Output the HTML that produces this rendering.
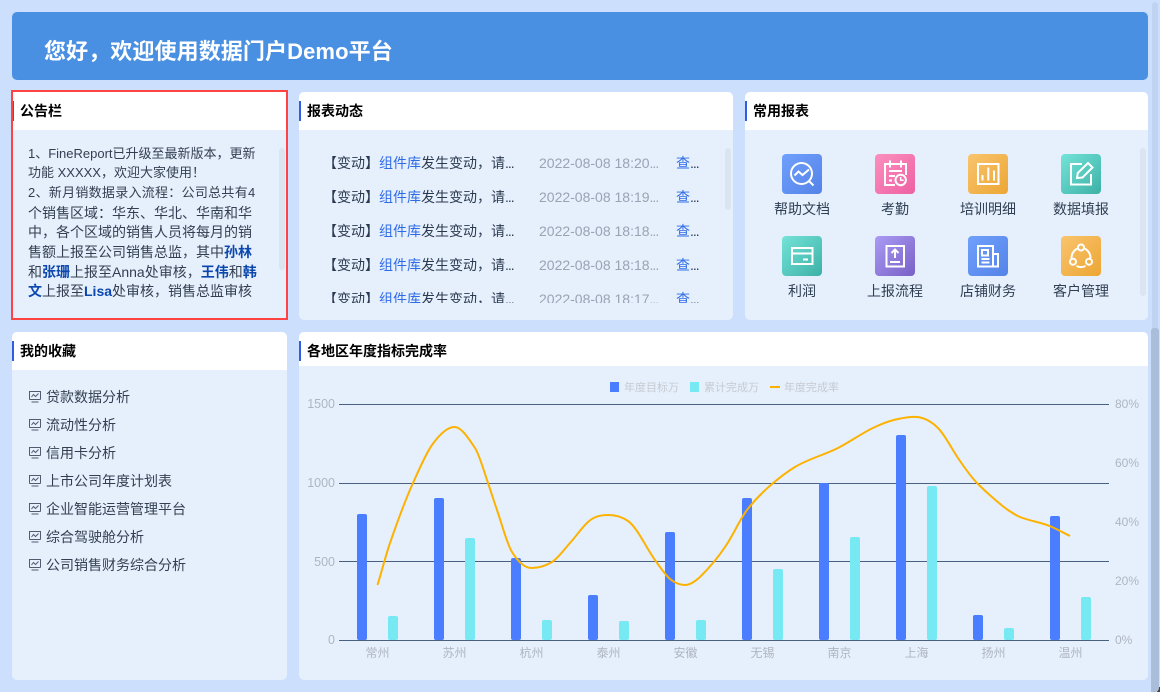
<!DOCTYPE html>
<html lang="zh-CN"><head><meta charset="utf-8"><title>数据门户</title>
<style>
*{box-sizing:border-box}
html,body{margin:0;padding:0;width:1160px;height:692px;overflow:hidden;background:#cce0fe}
body{position:relative;font-family:"Liberation Sans","Noto Sans CJK SC",sans-serif;font-size:14px;color:#333f50}
.abs{position:absolute}
.t{position:absolute;white-space:nowrap;line-height:20px;height:20px}
.n{font-size:13px;color:#333f50}
.banner{position:absolute;left:12px;top:12px;width:1136px;height:68px;background:#4a90e2;border-radius:5px}
.banner div{position:absolute;left:32px;top:24px;font-size:22px;font-weight:bold;color:#fff;line-height:32px;white-space:nowrap;letter-spacing:.1px}
.panel{position:absolute;background:#e6f0fd;border-radius:5px;overflow:hidden}
.head{position:absolute;left:0;top:0;width:100%;height:38px;background:#fff}
.head i{position:absolute;left:0;top:9px;width:2px;height:20px;background:#2f5fe0}
.head b{position:absolute;left:8px;top:9px;line-height:20px;font-size:14px;color:#000;white-space:nowrap}
.sb{position:absolute;width:6px;background:#dbe5f1;border-radius:3px}
.a{color:#0b47ad;font-weight:bold}
.rows{position:absolute;left:299px;top:130px;width:434px;height:173px;overflow:hidden}
.rows .t{color:#2c3a4f}
.rows em{font-style:normal;color:#2f6be6}
.rows .d{color:#98a3b3}
.rows u{text-decoration:none;letter-spacing:-1px;color:#2c3a4f}
.rows .d u{color:#98a3b3}
.lbl{position:absolute;width:90px;text-align:center;line-height:20px;color:#2f3e52;white-space:nowrap}
.ic{position:absolute;width:40px;height:40px;border-radius:4px}
.ic svg{display:block}
.ic svg *{fill:none;stroke:#fff;stroke-width:2}
.b1{background:linear-gradient(135deg,#70a0fc,#5483e8)}
.b2{background:linear-gradient(135deg,#fb90bf,#ee60a2)}
.b3{background:linear-gradient(135deg,#f9c46e,#eca633)}
.b4{background:linear-gradient(135deg,#74e3d8,#3db1a7)}
.b5{background:linear-gradient(135deg,#ab9bf4,#7860c6)}
.fav{position:absolute;left:46px;white-space:nowrap;line-height:20px;color:#333f50}
.fi{position:absolute;left:29px}
</style></head><body>

<div class="banner"><div>您好，欢迎使用数据门户Demo平台</div></div>

<!-- 公告栏 -->
<div class="panel" style="left:12px;top:92px;width:275px;height:228px;border-radius:0">
  <div class="head"><i></i><b>公告栏</b></div>
</div>
<div class="abs" style="left:11px;top:90px;width:277px;height:230px;border:2px solid #ff4343"></div>
<div class="t n" style="left:28px;top:144px">1、FineReport已升级至最新版本，更新</div>
<div class="t n" style="left:28px;top:163px">功能 XXXXX，欢迎大家使用！</div>
<div class="t n" style="left:28px;top:183px;letter-spacing:.28px">2、新月销数据录入流程：公司总共有4</div>
<div class="t" style="left:28px;top:203px">个销售区域：华东、华北、华南和华</div>
<div class="t" style="left:28px;top:222px">中，各个区域的销售人员将每月的销</div>
<div class="t" style="left:28px;top:242px">售额上报至公司销售总监，其中<span class="a">孙林</span></div>
<div class="t" style="left:28px;top:262px">和<span class="a">张珊</span>上报至Anna处审核，<span class="a">王伟</span>和<span class="a">韩</span></div>
<div class="t" style="left:28px;top:281px"><span class="a">文</span>上报至<span class="a">Lisa</span>处审核，销售总监审核</div>
<div class="sb" style="left:279px;top:148px;height:122px"></div>

<!-- 报表动态 -->
<div class="panel" style="left:299px;top:92px;width:434px;height:228px">
  <div class="head"><i></i><b>报表动态</b></div>
</div>
<div class="rows">
  <div class="t" style="left:24px;top:23px">【变动】<em>组件库</em>发生变动，请<u>...</u></div><div class="t d" style="left:240px;top:23px">2022-08-08 18:20<u>...</u></div><div class="t" style="left:377px;top:23px"><em>查</em><u>...</u></div>
  <div class="t" style="left:24px;top:57px">【变动】<em>组件库</em>发生变动，请<u>...</u></div><div class="t d" style="left:240px;top:57px">2022-08-08 18:19<u>...</u></div><div class="t" style="left:377px;top:57px"><em>查</em><u>...</u></div>
  <div class="t" style="left:24px;top:91px">【变动】<em>组件库</em>发生变动，请<u>...</u></div><div class="t d" style="left:240px;top:91px">2022-08-08 18:18<u>...</u></div><div class="t" style="left:377px;top:91px"><em>查</em><u>...</u></div>
  <div class="t" style="left:24px;top:125px">【变动】<em>组件库</em>发生变动，请<u>...</u></div><div class="t d" style="left:240px;top:125px">2022-08-08 18:18<u>...</u></div><div class="t" style="left:377px;top:125px"><em>查</em><u>...</u></div>
  <div class="t" style="left:24px;top:159px">【变动】<em>组件库</em>发生变动，请<u>...</u></div><div class="t d" style="left:240px;top:159px">2022-08-08 18:17<u>...</u></div><div class="t" style="left:377px;top:159px"><em>查</em><u>...</u></div>
</div>
<div class="sb" style="left:725px;top:148px;height:62px"></div>

<!-- 常用报表 -->
<div class="panel" style="left:745px;top:92px;width:403px;height:228px">
  <div class="head"><i></i><b>常用报表</b></div>
</div>
<div class="sb" style="left:1140px;top:148px;height:148px"></div>

<div class="ic b1" style="left:782px;top:154px"><svg width="40" height="40" viewBox="0 0 40 40"><circle cx="19.5" cy="19.5" r="10.5"/><path d="M27 27l4.500 4.500M12.500 21.500l4-4 4 3.500 6.500-5.500"/></svg></div>
<div class="ic b2" style="left:875px;top:154px"><svg width="40" height="40" viewBox="0 0 40 40"><path d="M20 31H10V10h21v11M15 6.500v7M26 6.500v7M14 17h13M14 22h6M14 26.500h3"/><circle cx="25.700" cy="26" r="5.200"/><path d="M25.700 23v3.200h3" style="stroke-width:1.500"/></svg></div>
<div class="ic b3" style="left:968px;top:154px"><svg width="40" height="40" viewBox="0 0 40 40"><rect x="10" y="10" width="20.500" height="20"/><path d="M14.500 26.500v-5.500M20.300 26.500V13.500M26 26.500V16.500"/></svg></div>
<div class="ic b4" style="left:1061px;top:154px"><svg width="40" height="40" viewBox="0 0 40 40"><path d="M21 10H10v20.500h20V20"/><path d="M16 24l.8-5L27 9l4.500 4.500L21.500 23.500z"/></svg></div>
<div class="lbl" style="left:757px;top:199px">帮助文档</div>
<div class="lbl" style="left:850px;top:199px">考勤</div>
<div class="lbl" style="left:943px;top:199px">培训明细</div>
<div class="lbl" style="left:1036px;top:199px">数据填报</div>

<div class="ic b4" style="left:782px;top:236px"><svg width="40" height="40" viewBox="0 0 40 40"><rect x="10" y="12" width="20.500" height="16"/><path d="M10 17.500h20.500M21 23.500h5"/></svg></div>
<div class="ic b5" style="left:875px;top:236px"><svg width="40" height="40" viewBox="0 0 40 40"><rect x="11.500" y="10" width="17.500" height="20.500"/><path d="M20 22v-8.500M16.500 17l3.500-3.500 3.500 3.500M15 26h10"/></svg></div>
<div class="ic b1" style="left:968px;top:236px"><svg width="40" height="40" viewBox="0 0 40 40"><path d="M25 30.500H10V10h15v20.500h5V18h-5"/><rect x="14" y="14" width="6" height="5.500"/><path d="M13.500 23h8M13.500 26.500h8"/></svg></div>
<div class="ic b3" style="left:1061px;top:236px"><svg width="40" height="40" viewBox="0 0 40 40"><circle cx="20" cy="11.500" r="3"/><circle cx="12" cy="25.700" r="3"/><circle cx="28" cy="25.700" r="3"/><path d="M16.500 12.500a10.500 10.500 0 0 0-6 9.500M23.500 12.500a10.500 10.500 0 0 1 6 9.500M15.500 30a10.500 10.500 0 0 0 9 0"/></svg></div>
<div class="lbl" style="left:757px;top:281px">利润</div>
<div class="lbl" style="left:850px;top:281px">上报流程</div>
<div class="lbl" style="left:943px;top:281px">店铺财务</div>
<div class="lbl" style="left:1036px;top:281px">客户管理</div>

<!-- 我的收藏 -->
<div class="panel" style="left:12px;top:332px;width:275px;height:348px">
  <div class="head"><i></i><b>我的收藏</b></div>
</div>
<svg class="fi" style="top:391px" width="12" height="12" viewBox="0 0 12 12"><path d="M.5 8.500V.5h11v8M.5 8.500h11M2.500 11h7M2.500 6l2-2.500 2 2 3-3" fill="none" stroke="#4f5c6e" stroke-width="1"/></svg>
<svg class="fi" style="top:419px" width="12" height="12" viewBox="0 0 12 12"><path d="M.5 8.500V.5h11v8M.5 8.500h11M2.500 11h7M2.500 6l2-2.500 2 2 3-3" fill="none" stroke="#4f5c6e" stroke-width="1"/></svg>
<svg class="fi" style="top:447px" width="12" height="12" viewBox="0 0 12 12"><path d="M.5 8.500V.5h11v8M.5 8.500h11M2.500 11h7M2.500 6l2-2.500 2 2 3-3" fill="none" stroke="#4f5c6e" stroke-width="1"/></svg>
<svg class="fi" style="top:475px" width="12" height="12" viewBox="0 0 12 12"><path d="M.5 8.500V.5h11v8M.5 8.500h11M2.500 11h7M2.500 6l2-2.500 2 2 3-3" fill="none" stroke="#4f5c6e" stroke-width="1"/></svg>
<svg class="fi" style="top:503px" width="12" height="12" viewBox="0 0 12 12"><path d="M.5 8.500V.5h11v8M.5 8.500h11M2.500 11h7M2.500 6l2-2.500 2 2 3-3" fill="none" stroke="#4f5c6e" stroke-width="1"/></svg>
<svg class="fi" style="top:531px" width="12" height="12" viewBox="0 0 12 12"><path d="M.5 8.500V.5h11v8M.5 8.500h11M2.500 11h7M2.500 6l2-2.500 2 2 3-3" fill="none" stroke="#4f5c6e" stroke-width="1"/></svg>
<svg class="fi" style="top:559px" width="12" height="12" viewBox="0 0 12 12"><path d="M.5 8.500V.5h11v8M.5 8.500h11M2.500 11h7M2.500 6l2-2.500 2 2 3-3" fill="none" stroke="#4f5c6e" stroke-width="1"/></svg>
<div class="fav" style="top:387px">贷款数据分析</div>
<div class="fav" style="top:415px">流动性分析</div>
<div class="fav" style="top:443px">信用卡分析</div>
<div class="fav" style="top:471px">上市公司年度计划表</div>
<div class="fav" style="top:499px">企业智能运营管理平台</div>
<div class="fav" style="top:527px">综合驾驶舱分析</div>
<div class="fav" style="top:555px">公司销售财务综合分析</div>

<!-- 图表 -->
<div class="panel" style="left:299px;top:332px;width:849px;height:348px">
  <div class="head" style="height:34px"><i></i><b>各地区年度指标完成率</b></div>
</div>
<svg class="abs" style="left:0;top:0" width="1160" height="692" viewBox="0 0 1160 692">
  <g stroke="#4a6080" stroke-width="1">
    <path d="M339 404.500H1109M339 483.500H1109M339 561.500H1109M339 640.500H1109"/>
  </g>
  <g fill="#4a7dff">
    <rect x="357" y="514" width="10" height="126" rx="2"/>
    <rect x="434" y="498" width="10" height="142" rx="2"/>
    <rect x="511" y="558" width="10" height="82" rx="2"/>
    <rect x="588" y="595" width="10" height="45" rx="2"/>
    <rect x="665" y="532" width="10" height="108" rx="2"/>
    <rect x="742" y="498" width="10" height="142" rx="2"/>
    <rect x="819" y="483" width="10" height="157" rx="2"/>
    <rect x="896" y="435" width="10" height="205" rx="2"/>
    <rect x="973" y="615" width="10" height="25" rx="2"/>
    <rect x="1050" y="516" width="10" height="124" rx="2"/>
  </g>
  <g fill="#76e9f2">
    <rect x="388" y="616" width="10" height="24" rx="2"/>
    <rect x="465" y="538" width="10" height="102" rx="2"/>
    <rect x="542" y="620" width="10" height="20" rx="2"/>
    <rect x="619" y="621" width="10" height="19" rx="2"/>
    <rect x="696" y="620" width="10" height="20" rx="2"/>
    <rect x="773" y="569" width="10" height="71" rx="2"/>
    <rect x="850" y="537" width="10" height="103" rx="2"/>
    <rect x="927" y="486" width="10" height="154" rx="2"/>
    <rect x="1004" y="628" width="10" height="12" rx="2"/>
    <rect x="1081" y="597" width="10" height="43" rx="2"/>
  </g>
  <path fill="none" stroke="#fdb200" stroke-width="2" d="M377.500 585C381.700 571.700 385.800 555.100 390 543C397.700 520.800 405.300 499.900 413 483C419.300 469.100 425.700 453.900 432 445C439.500 434.500 447 427 454.500 427C461.300 427 468.200 437.800 475 448C479.300 454.500 483.700 470.400 488 483C491 491.700 494 501.300 497 510C502 524.500 507 544 512 552C518.500 562.400 525 568 531.500 568C538.300 568 545.200 566.100 552 562C558 558.400 564 549.600 570 543C576 536.400 582 527.400 588 522C594.800 515.900 601.700 515 608.500 515C615 515 621.500 516.500 628 521C637 527.300 646 547.400 655 560C660 567 665 574.500 670 579C675 583 680 585 685 585C690 585 695 581.500 700 577C706.700 570.300 716.700 559.700 725 547C732.300 537 739.700 519.500 747 510C755.300 499.200 763.700 491.100 772 484C779.700 477.500 787.300 471.600 795 467C809.300 458.400 823.700 455.200 838 448C850.300 441.800 862.700 432.500 875 427C882.700 423.500 890.300 420.500 898 419C904.300 417.700 910.700 416.400 917 417C924 417.700 931 421 938 428C944.700 434.700 951.300 448 958 458C964.700 468 971.300 477.300 978 484C982.700 488.700 987.300 493 992 497C997.300 501.500 1002.700 506.500 1008 510C1012 512.600 1016 515.400 1020 517C1030.700 521.300 1041.300 522.200 1052 527C1058 529.700 1064 533 1070 536"/>
  <g font-family="'Liberation Sans','Noto Sans CJK SC',sans-serif" font-size="12" fill="#aeb5bf">
    <g text-anchor="end" font-size="12.500">
      <text x="335" y="408">1500</text><text x="335" y="487">1000</text><text x="335" y="566">500</text><text x="335" y="644">0</text>
    </g>
    <text x="1115" y="408">80%</text><text x="1115" y="467">60%</text><text x="1115" y="526">40%</text><text x="1115" y="585">20%</text><text x="1115" y="644">0%</text>
    <g text-anchor="middle">
      <text x="377.500" y="657">常州</text><text x="454.500" y="657">苏州</text><text x="531.500" y="657">杭州</text><text x="608.500" y="657">泰州</text><text x="685.500" y="657">安徽</text><text x="762.500" y="657">无锡</text><text x="839.500" y="657">南京</text><text x="916.500" y="657">上海</text><text x="993.500" y="657">扬州</text><text x="1070.500" y="657">温州</text>
    </g>
  </g>
  <g font-family="'Liberation Sans','Noto Sans CJK SC',sans-serif" font-size="11" fill="#c6cad1">
    <rect x="610" y="382" width="9" height="10" fill="#4a7dff"/><text x="624" y="391">年度目标万</text>
    <rect x="690" y="382" width="9" height="10" fill="#76e9f2"/><text x="704" y="391">累计完成万</text>
    <rect x="770" y="386" width="10" height="2" fill="#fdb200"/><text x="784" y="391">年度完成率</text>
  </g>
</svg>

<!-- 页面滚动条 -->
<div class="abs" style="left:1152px;top:2px;width:6px;height:340px;background:#bfd4f2;border-radius:3px 3px 0 0"></div>
<div class="abs" style="left:1157px;top:687px;width:3px;height:5px;background:#444"></div>
<div class="abs" style="left:1151px;top:328px;width:8px;height:364px;background:#abbed9;border-radius:3px 3px 4px 0"></div>
</body></html>
